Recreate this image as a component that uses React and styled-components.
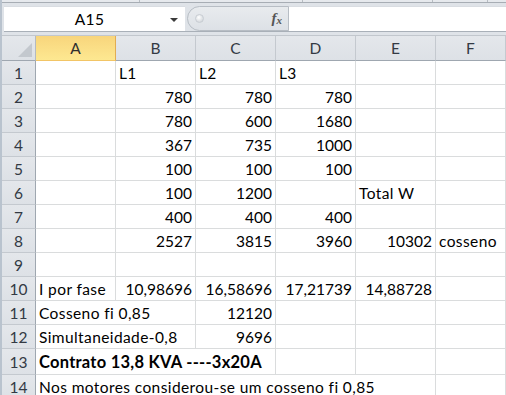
import styled, {createGlobalStyle} from 'styled-components';

const GlobalStyle = createGlobalStyle`
    html, body {
        margin: 0;
        padding: 0;
        background: #ffffff;
    }
    body {
        font-family: Lato, "Liberation Sans", sans-serif;
        overflow: hidden;
    }
`;

const columns = ['A', 'B', 'C', 'D', 'E', 'F'];

// each row: list of cells {v, r (right aligned), span, bold}
const rows = [
    {n: 1, cells: [{}, {v: 'L1'}, {v: 'L2'}, {v: 'L3'}, {}, {}]},
    {n: 2, cells: [{}, {v: '780', r: true}, {v: '780', r: true}, {v: '780', r: true}, {}, {}]},
    {n: 3, cells: [{}, {v: '780', r: true}, {v: '600', r: true}, {v: '1680', r: true}, {}, {}]},
    {n: 4, cells: [{}, {v: '367', r: true}, {v: '735', r: true}, {v: '1000', r: true}, {}, {}]},
    {n: 5, cells: [{}, {v: '100', r: true}, {v: '100', r: true}, {v: '100', r: true}, {}, {}]},
    {n: 6, cells: [{}, {v: '100', r: true}, {v: '1200', r: true}, {}, {v: 'Total W'}, {}]},
    {n: 7, cells: [{}, {v: '400', r: true}, {v: '400', r: true}, {v: '400', r: true}, {}, {}]},
    {n: 8, cells: [{}, {v: '2527', r: true}, {v: '3815', r: true}, {v: '3960', r: true}, {v: '10302', r: true}, {v: 'cosseno'}]},
    {n: 9, cells: [{}, {}, {}, {}, {}, {}]},
    {n: 10, cells: [{v: 'I por fase'}, {v: '10,98696', r: true}, {v: '16,58696', r: true}, {v: '17,21739', r: true}, {v: '14,88728', r: true}, {}]},
    {n: 11, cells: [{v: 'Cosseno fi 0,85', span: 2}, {v: '12120', r: true}, {}, {}, {}]},
    {n: 12, cells: [{v: 'Simultaneidade-0,8', span: 2}, {v: '9696', r: true}, {}, {}, {}]},
    {n: 13, tall: true, cells: [{v: 'Contrato 13,8 KVA ----3x20A', span: 3, bold: true}, {}, {}, {}]},
    {n: 14, cells: [{v: 'Nos motores considerou-se um cosseno fi 0,85', span: 5}, {}]},
];

function App() {
    return (
        <Window>
            <GlobalStyle />
            <RibbonEdge>
                <RibbonTick $x={137} />
                <RibbonTick $x={300} />
                <RibbonTick $x={430} />
                <RibbonTick $x={485} />
            </RibbonEdge>
            <FormulaBar>
                <NameBox>
                    <NameText>A15</NameText>
                    <DropArrow />
                </NameBox>
                <Splitter>
                    <Knob />
                    <Fx>
                        f<sub>x</sub>
                    </Fx>
                </Splitter>
                <FormulaInput />
            </FormulaBar>
            <Sheet>
                <Corner>
                    <CornerTriangle />
                </Corner>
                {columns.map(c => (
                    <ColHeader key={c} $selected={c === 'A'}>{c}</ColHeader>
                ))}
                {rows.map(row => (
                    <Row key={row.n} $tall={row.tall}>
                        <RowHeader>{row.n}</RowHeader>
                        {row.cells.map((cell, i) => (
                            <Cell
                                key={i}
                                $span={cell.span || 1}
                                $right={cell.r}
                                $bold={cell.bold}
                            >
                                {cell.v}
                            </Cell>
                        ))}
                    </Row>
                ))}
            </Sheet>
        </Window>
    );
}

const Window = styled.div`
    width: 506px;
    height: 395px;
    display: flex;
    flex-direction: column;
    background: #dfe3e8;
    overflow: hidden;
    border-left: 2px solid #b9c3ce;
    box-sizing: border-box;
`;

const RibbonEdge = styled.div`
    position: relative;
    height: 2px;
    background: #e6e9ed;
    border-bottom: 1px solid #a7adb4;
    flex-shrink: 0;
`;

const RibbonTick = styled.span`
    position: absolute;
    top: 0;
    left: ${p => p.$x}px;
    width: 1px;
    height: 2px;
    background: #b7bcc2;
`;

const FormulaBar = styled.div`
    display: flex;
    height: 25px;
    margin: 3px 0 0 2px;
    border-bottom: 1px solid #a9b0b8;
    flex-shrink: 0;
`;

const NameBox = styled.div`
    width: 181px;
    background: #ffffff;
    display: flex;
    align-items: center;
    position: relative;
    border-top: 1px solid #d9dde2;
`;

const NameText = styled.span`
    width: 100%;
    text-align: center;
    font-size: 15.5px;
    letter-spacing: 0.3px;
    color: #000;
    padding-right: 10px;
    box-sizing: border-box;
`;

const DropArrow = styled.span`
    position: absolute;
    right: 7px;
    top: 11px;
    width: 0;
    height: 0;
    border-left: 4px solid transparent;
    border-right: 4px solid transparent;
    border-top: 4px solid #3b3b3b;
`;

const Splitter = styled.div`
    width: 102px;
    display: flex;
    align-items: center;
    justify-content: space-between;
    background: linear-gradient(#e8ebee, #dde1e6);
    padding: 0 6px 0 7px;
    box-sizing: border-box;
    border: 1px solid #b7bdc4;
    border-radius: 13px 0 0 13px;
    margin-left: 2px;
`;

const Knob = styled.span`
    width: 7px;
    height: 7px;
    border-radius: 50%;
    background: radial-gradient(circle at 40% 35%, #ffffff, #c7ccd2);
    border: 1px solid #c8cdd3;
`;

const Fx = styled.span`
    font-family: "Liberation Serif", serif;
    font-style: italic;
    font-weight: bold;
    font-size: 15px;
    color: #555;

    sub {
        font-size: 11px;
        vertical-align: -1px;
    }
`;

const FormulaInput = styled.div`
    flex: 1;
    background: #ffffff;
    border-top: 1px solid #d9dde2;
`;

const Sheet = styled.div`
    margin-top: 3px;
    display: grid;
    grid-template-columns: 34px 80px 80px 80px 80px 80px 1fr;
    grid-template-rows: 25px;
    grid-auto-rows: auto;
    background: #ffffff;
    border-top: 1px solid #c2c7cd;
    flex: 1;
    align-content: start;
`;

const Row = styled.div`
    display: contents;

    & > * {
        height: ${p => (p.$tall ? '26px' : '24px')};
        line-height: ${p => (p.$tall ? '26px' : '24px')};
    }
`;

const HeaderBase = styled.div`
    box-sizing: border-box;
    background: linear-gradient(#e4e7eb, #dde1e6);
    color: #333a44;
    font-size: 15.5px;
    text-align: center;
`;

const Corner = styled(HeaderBase)`
    position: relative;
    border-right: 1px solid #b4bac1;
    border-bottom: 1px solid #9fa7b0;
`;

const CornerTriangle = styled.span`
    position: absolute;
    right: 3px;
    bottom: 3px;
    width: 0;
    height: 0;
    border-left: 14px solid transparent;
    border-bottom: 14px solid #c3c8ce;
`;

const ColHeader = styled(HeaderBase)`
    line-height: 24px;
    border-right: 1px solid ${p => (p.$selected ? '#e2ad52' : '#c4c9cf')};
    border-bottom: 1px solid ${p => (p.$selected ? '#f2c566' : '#9fa7b0')};
    ${p => p.$selected && `
        background: linear-gradient(#f8d57c, #fde891);
        color: #2f2f2f;
    `}
`;

const RowHeader = styled(HeaderBase)`
    border-right: 1px solid #9fa7b0;
    border-bottom: 1px solid #c4c9cf;
`;

const Cell = styled.div`
    grid-column: span ${p => p.$span};
    box-sizing: border-box;
    border-right: 1px solid #dadcdd;
    border-bottom: 1px solid #dadcdd;
    padding: 0 3px;
    font-size: ${p => (p.$bold ? '16.5px' : '15.5px')};
    font-weight: ${p => (p.$bold ? 700 : 400)};
    letter-spacing: ${p => (p.$right ? '0' : p.$bold ? '0.25px' : '0.4px')};
    text-align: ${p => (p.$right ? 'right' : 'left')};
    color: #000;
    white-space: nowrap;
    overflow: hidden;
`;

export default App;
